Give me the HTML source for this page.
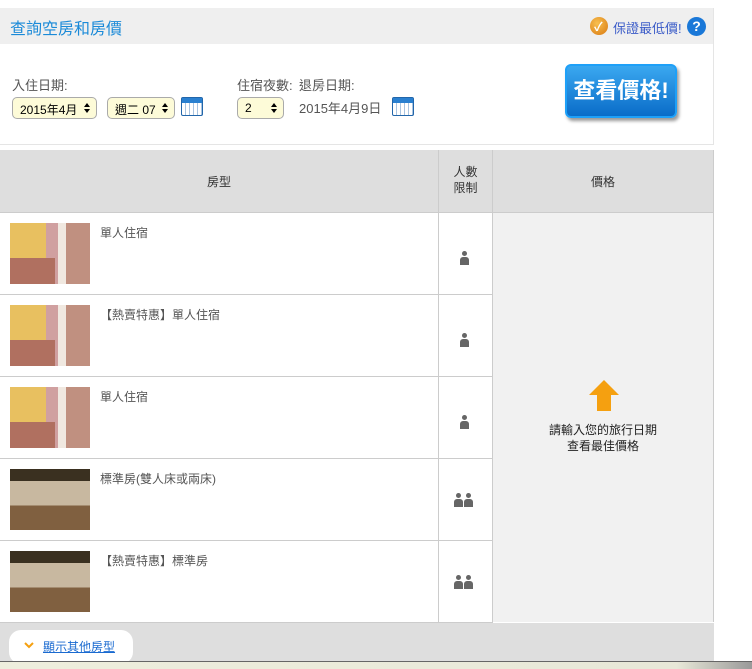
<!DOCTYPE html>
<html><head><meta charset="utf-8"><style>
*{margin:0;padding:0;box-sizing:border-box}
body{width:752px;height:669px;background:#fff;font-family:"Liberation Sans","Noto Sans CJK TC",sans-serif;position:relative;overflow:hidden;color:#555}
.abs{position:absolute}
.hdr{left:0;top:8px;width:714px;height:36px;background:#efefef}
.title{left:10px;top:15px;font-size:16px;color:#1a8ad8}
.guar{font-size:13px;color:#3a5bc8}
.lbl{font-size:13px;color:#555}
.sel{height:22px;border:1px solid #aaa;border-radius:5px;background:#fdfbd8;font-size:12px;color:#000;padding:3px 0 0 7px;white-space:nowrap;overflow:hidden}
.sel:after{content:"";position:absolute;right:6px;top:5px;border:3px solid transparent;border-bottom:4px solid #000;border-top:none}
.sel:before{content:"";position:absolute;right:6px;top:11px;border:3px solid transparent;border-top:4px solid #000;border-bottom:none}
.cal{width:22px;height:19px;border:1px solid #2266aa;border-radius:2px;background:repeating-linear-gradient(90deg,#fff 0 3px,#aac4e0 3px 4px),#fff}
.cal:before{content:"";position:absolute;left:0;top:0;right:0;height:5px;background:#2a80d0}
.btn{left:565px;top:64px;width:112px;height:54px;border:2px solid #1ea0f8;border-radius:6px;background:linear-gradient(#3aa8f0,#0a6cc8);color:#fff;font-weight:bold;font-size:22px;text-align:center;line-height:50px;box-shadow:2px 3px 3px #999}
.thead{left:0;top:150px;width:714px;height:63px;background:#dedede;border-bottom:1px solid #ccc}
.th{font-size:12px;color:#333;text-align:center}
.row{left:0;width:439px;height:82px;border-bottom:1px solid #ccc}
.pic{left:10px;top:10px;width:80px;height:61px}
.rn{left:100px;top:11px;font-size:12px;color:#555}
.ppl{left:439px;width:54px;height:82px;border-bottom:1px solid #ccc}
.p{position:absolute;width:9px;height:8px;background:#666;border-radius:3px 3px 0 0}
.p:before{content:"";position:absolute;left:2px;top:-6px;width:5px;height:5px;border-radius:50%;background:#666}
</style></head><body>
<div class="abs hdr"></div>
<div class="abs title">查詢空房和房價</div>
<div class="abs" style="left:590px;top:17px;width:18px;height:18px;border-radius:50%;background:radial-gradient(circle at 40% 35%,#f8c050,#d87810);"></div>
<div class="abs" style="left:594px;top:18px;color:#fff;font-size:12px;font-weight:bold">✓</div>
<div class="abs guar" style="left:613px;top:18px">保證最低價!</div>
<div class="abs" style="left:687px;top:17px;width:19px;height:19px;border-radius:50%;background:#1a78d8;color:#fff;font-weight:bold;font-size:14px;text-align:center;line-height:19px">?</div>
<div class="abs" style="left:713px;top:8px;width:1px;height:137px;background:#e5e5e5"></div>
<div class="abs" style="left:0;top:144px;width:714px;height:1px;background:#e5e5e5"></div>
<div class="abs lbl" style="left:12px;top:75px">入住日期:</div>
<div class="abs lbl" style="left:237px;top:75px">住宿夜數:</div>
<div class="abs lbl" style="left:299px;top:75px">退房日期:</div>
<div class="abs sel" style="left:12px;top:97px;width:85px">2015年4月</div>
<div class="abs sel" style="left:107px;top:97px;width:68px">週二 07</div>
<div class="abs cal" style="left:181px;top:97px"></div>
<div class="abs sel" style="left:237px;top:97px;width:47px">2</div>
<div class="abs lbl" style="left:299px;top:98px">2015年4月9日</div>
<div class="abs cal" style="left:392px;top:97px"></div>
<div class="abs btn">查看價格!</div>

<div class="abs thead"></div>
<div class="abs" style="left:438px;top:150px;width:1px;height:472px;background:#ccc"></div>
<div class="abs" style="left:492px;top:150px;width:1px;height:472px;background:#ccc"></div>
<div class="abs" style="left:713px;top:150px;width:1px;height:472px;background:#ccc"></div>
<div class="abs th" style="left:0;width:438px;top:173px">房型</div>
<div class="abs th" style="left:439px;width:53px;top:164px;line-height:16px">人數<br>限制</div>
<div class="abs th" style="left:493px;width:220px;top:173px">價格</div>
<div class="abs" style="left:493px;top:213px;width:220px;height:409px;background:#f1f1f1"></div>
<div class="abs" style="left:589px;top:380px;width:30px;height:31px">
<div class="abs" style="left:0;top:0;border:15px solid transparent;border-bottom:15px solid #f5a010;border-top:none;width:0"></div>
<div class="abs" style="left:8px;top:14px;width:14px;height:17px;background:#f5a010"></div></div>
<div class="abs" style="left:493px;width:220px;top:422px;text-align:center;font-size:12px;color:#222;line-height:16px">請輸入您的旅行日期<br>查看最佳價格</div>

<div class="abs row" style="top:213px"><div class="abs pic" style="background:linear-gradient(90deg,#e8c060 0 45%,#d0a0a0 45% 60%,#f0e8e0 60% 70%,#c09080 70%)"></div><div class="abs" style="left:10px;top:45px;width:45px;height:26px;background:#b07060"></div><div class="abs rn">單人住宿</div></div>
<div class="abs row" style="top:295px"><div class="abs pic" style="background:linear-gradient(90deg,#e8c060 0 45%,#d0a0a0 45% 60%,#f0e8e0 60% 70%,#c09080 70%)"></div><div class="abs" style="left:10px;top:45px;width:45px;height:26px;background:#b07060"></div><div class="abs rn">【熱賣特惠】單人住宿</div></div>
<div class="abs row" style="top:377px"><div class="abs pic" style="background:linear-gradient(90deg,#e8c060 0 45%,#d0a0a0 45% 60%,#f0e8e0 60% 70%,#c09080 70%)"></div><div class="abs" style="left:10px;top:45px;width:45px;height:26px;background:#b07060"></div><div class="abs rn">單人住宿</div></div>
<div class="abs row" style="top:459px"><div class="abs pic" style="background:linear-gradient(180deg,#3a3020 0 20%,#c8b8a0 20% 60%,#806040 60%)"></div><div class="abs rn">標準房(雙人床或兩床)</div></div>
<div class="abs row" style="top:541px"><div class="abs pic" style="background:linear-gradient(180deg,#3a3020 0 20%,#c8b8a0 20% 60%,#806040 60%)"></div><div class="abs rn">【熱賣特惠】標準房</div></div>

<div class="abs ppl" style="top:213px"><div class="p" style="left:21px;top:44px"></div></div>
<div class="abs ppl" style="top:295px"><div class="p" style="left:21px;top:44px"></div></div>
<div class="abs ppl" style="top:377px"><div class="p" style="left:21px;top:44px"></div></div>
<div class="abs ppl" style="top:459px"><div class="p" style="left:15px;top:40px"></div><div class="p" style="left:25px;top:40px"></div></div>
<div class="abs ppl" style="top:541px"><div class="p" style="left:15px;top:40px"></div><div class="p" style="left:25px;top:40px"></div></div>

<div class="abs" style="left:0;top:623px;width:714px;height:39px;background:#dedede"></div>
<div class="abs" style="left:9px;top:630px;width:124px;height:34px;background:#fff;border-radius:12px"></div>
<svg class="abs" style="left:24px;top:642px" width="10" height="7"><path d="M1 1 L5 5 L9 1" stroke="#f5a010" stroke-width="2" fill="none"/></svg>
<div class="abs" style="left:43px;top:638px;font-size:12px;color:#1a6ad0;text-decoration:underline">顯示其他房型</div>
<div class="abs" style="left:0;top:661px;width:752px;height:1px;background:#666"></div>
<div class="abs" style="left:0;top:662px;width:752px;height:7px;background:linear-gradient(90deg,#eeeedd,#e8e8d8 90%,#999)"></div>
</body></html>
